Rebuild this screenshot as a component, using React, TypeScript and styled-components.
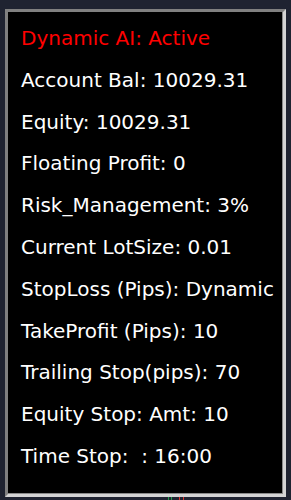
import styled, { createGlobalStyle } from 'styled-components';

interface IStatRow {
  label: string;
  value: string;
  accent?: boolean;
}

const rows: IStatRow[] = [
  { label: 'Dynamic AI', value: 'Active', accent: true },
  { label: 'Account Bal', value: '10029.31' },
  { label: 'Equity', value: '10029.31' },
  { label: 'Floating Profit', value: '0' },
  { label: 'Risk_Management', value: '3%' },
  { label: 'Current LotSize', value: '0.01' },
  { label: 'StopLoss (Pips)', value: 'Dynamic' },
  { label: 'TakeProfit (Pips)', value: '10' },
  { label: 'Trailing Stop(pips)', value: '70' },
  { label: 'Equity Stop', value: 'Amt: 10' },
  { label: 'Time Stop', value: ' : 16:00' },
];

const GlobalStyle = createGlobalStyle`
  html, body {
    margin: 0;
    padding: 0;
    background: #1f2331;
  }

  body {
    width: 291px;
    height: 500px;
    overflow: hidden;
    font-family: 'DejaVu Sans', 'Liberation Sans', sans-serif;
  }
`;

const Screen = styled.div`
  position: relative;
  width: 291px;
  height: 500px;
  padding: 9px 0 0 5px;
  box-sizing: border-box;
`;

const Panel = styled.div`
  width: 281px;
  height: 488px;
  box-sizing: border-box;
  background: #000;
  border-style: solid;
  border-width: 3px;
  border-color: #808080 #d4d4d4 #d4d4d4 #808080;
  box-shadow: inset -1px -1px 0 #8a8a8a;
  padding: 6px 0 0 13px;
  display: flex;
  flex-direction: column;
`;

const Row = styled.div<{ $accent?: boolean }>`
  font-size: 20px;
  line-height: 41.8px;
  white-space: pre;
  color: ${(p) => (p.$accent ? '#ff0000' : '#ffffff')};
`;

const Candles = styled.svg`
  position: absolute;
  left: 166px;
  bottom: 0;
`;

export default function App() {
  return (
    <>
      <GlobalStyle />
      <Screen>
        <Panel>
          {rows.map((row) => (
            <Row key={row.label} $accent={row.accent}>
              {row.label}: {row.value}
            </Row>
          ))}
        </Panel>
        <Candles width="20" height="3" viewBox="0 0 20 3">
          <rect x="2" y="0" width="1" height="3" fill="#1f9a4a" />
          <rect x="5" y="0" width="1" height="3" fill="#1f9a4a" />
          <rect x="13" y="0" width="1" height="3" fill="#d9302c" />
          <rect x="17" y="0" width="1" height="3" fill="#d9302c" />
        </Candles>
      </Screen>
    </>
  );
}
